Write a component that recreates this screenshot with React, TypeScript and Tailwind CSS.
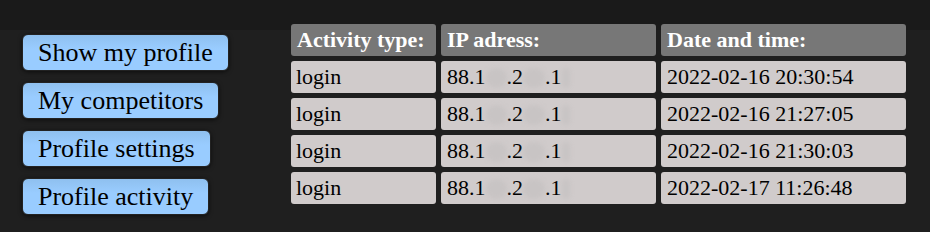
const menu = ["Show my profile", "My competitors", "Profile settings", "Profile activity"];

const activity = [
  { type: "login", date: "2022-02-16 20:30:54" },
  { type: "login", date: "2022-02-16 21:27:05" },
  { type: "login", date: "2022-02-16 21:30:03" },
  { type: "login", date: "2022-02-17 11:26:48" },
];

function Blur({ w }: { w: string }) {
  // hidden part of the address, painted as a soft smudge
  return <span className={`inline-block ${w} h-[20px] align-middle rounded-full bg-[#c8c4c4] blur-[2px]`} />;
}

export default function App() {
  return (
    <div
      className="w-[930px] h-[232px] flex bg-[linear-gradient(#1a1a1a_30px,#1f1f1f_30px)] font-[family-name:'Liberation_Serif',serif]"
    >
      <div className="flex flex-col items-start gap-[11px] pl-[22px] pt-[34px] w-[286px] shrink-0">
        {menu.map((label) => (
          <button
            key={label}
            className="h-[37px] pl-[15px] pr-[15px] rounded-md border border-[#222] bg-[linear-gradient(#8fc0ef,#99ccff_40%)] text-[26px] leading-none text-black shadow-[0_1px_4px_rgba(0,0,0,0.6)] font-[family-name:'Liberation_Serif',serif]"
          >
            {label}
          </button>
        ))}
      </div>

      <div className="pt-[19px]">
        <table className="border-separate border-spacing-[5px] text-[22px] leading-none">
          <thead>
            <tr>
              <th className="w-[145px] h-[32px] pl-[6px] text-left font-bold text-white bg-[#777] rounded-[3px]">
                Activity type:
              </th>
              <th className="w-[215px] h-[32px] pl-[6px] text-left font-bold text-white bg-[#777] rounded-[3px]">
                IP adress:
              </th>
              <th className="w-[245px] h-[32px] pl-[6px] text-left font-bold text-white bg-[#777] rounded-[3px]">
                Date and time:
              </th>
            </tr>
          </thead>
          <tbody>
            {activity.map((row, i) => (
              <tr key={i}>
                <td className="h-[32px] pl-[5px] text-black bg-[#d0cbcb] rounded-[3px]">{row.type}</td>
                <td className="h-[32px] pl-[6px] text-black bg-[#d0cbcb] rounded-[3px] whitespace-nowrap">
                  88.1<Blur w="w-[21px]" />.2<Blur w="w-[22px]" />.1<Blur w="w-[8px]" />
                </td>
                <td className="h-[32px] pl-[6px] text-black bg-[#d0cbcb] rounded-[3px]">{row.date}</td>
              </tr>
            ))}
          </tbody>
        </table>
      </div>
    </div>
  );
}
